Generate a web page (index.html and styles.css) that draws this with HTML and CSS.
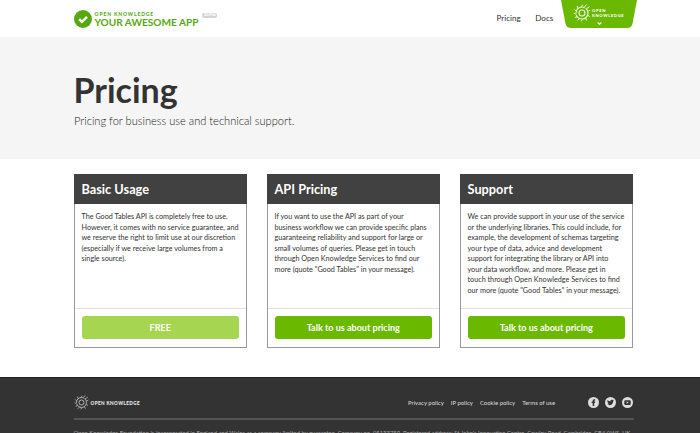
FILE: index.html
```html
<!DOCTYPE html>
<html lang="en">
<head>
<meta charset="utf-8">
<title>Pricing</title>
<link rel="stylesheet" href="styles.css">
</head>
<body>
<svg width="0" height="0" class="defs" aria-hidden="true">
  <symbol id="gear" viewBox="0 0 24 24">
    <g fill="none" stroke="currentColor">
      <circle cx="12" cy="12" r="4" stroke-width="1.5"/>
      <circle cx="12" cy="12" r="8" stroke-width="1.5" stroke-dasharray="22 1.5 17 1.5"/>
      <path d="M11 4l2-3M15 4.500l3-4M17.500 6.500l4.500-3M20 9.500l3-1.500M20 15l2.500 2M17 18.500l1 3.500M12.500 20l-1.500 3M8.500 19.500l-2.500 2.500M5.500 17l-3 1M4 13.500l-3-1M4.300 9.500l-2.500-2.500M6.500 6l-1-3.500" stroke-width="1.3"/>
    </g>
  </symbol>
</svg>
<header class="top">
  <div class="wrap top-row">
    <a class="brand">
      <svg class="check" viewBox="0 0 18 18"><circle cx="9" cy="9" r="9" fill="#55a910"/><path d="M5.100 9.100l2.800 2.700 5.100-5" fill="none" stroke="#fff" stroke-width="2.500"/></svg>
      <span class="brand-text"><span class="brand-org">OPEN KNOWLEDGE</span><span class="brand-name">YOUR AWESOME APP</span></span>
      <span class="badge">ALPHA</span>
    </a>
    <nav class="nav"><a>Pricing</a><a>Docs</a></nav>
    <div class="tab">
      <svg class="tab-shape" viewBox="0 0 76 28"><path d="M0 0H76L71.500 23.500Q70.500 28 66 28H10Q5.500 28 4.500 23.500Z" fill="#6ab800"/></svg>
      <svg class="tab-gear"><use href="#gear"/></svg>
      <span class="tab-text">OPEN<br>KNOWLEDGE</span>
      <svg class="chevron" viewBox="0 0 5 3"><path d="M.6.5l1.900 1.600L4.400.5" fill="none" stroke="#fff" stroke-width="1.200"/></svg>
    </div>
  </div>
</header>
<section class="hero">
  <div class="wrap">
    <h1>Pricing</h1>
    <p>Pricing for business use and technical support.</p>
  </div>
</section>
<main class="wrap cards">
  <article class="card">
    <h2>Basic Usage</h2>
    <p>The Good Tables API is completely free to use.<br>However, it comes with no service guarantee, and<br>we reserve the right to limit use at our discretion<br>(especially if we receive large volumes from a<br>single source).</p>
    <footer><a class="button free">FREE</a></footer>
  </article>
  <article class="card">
    <h2>API Pricing</h2>
    <p>If you want to use the API as part of your<br>business workflow we can provide specific plans<br>guaranteeing reliability and support for large or<br>small volumes of queries. Please get in touch<br>through Open Knowledge Services to find our<br>more (quote "Good Tables" in your message).</p>
    <footer><a class="button">Talk to us about pricing</a></footer>
  </article>
  <article class="card">
    <h2>Support</h2>
    <p>We can provide support in your use of the service<br>or the underlying libraries. This could include, for<br>example, the development of schemas targeting<br>your type of data, advice and development<br>support for integrating the library or API into<br>your data workflow, and more. Please get in<br>touch through Open Knowledge Services to find<br>our more (quote "Good Tables" in your message).</p>
    <footer><a class="button">Talk to us about pricing</a></footer>
  </article>
</main>
<footer class="site-footer">
  <div class="wrap">
    <div class="footer-row">
      <div class="footer-brand"><svg><use href="#gear"/></svg><span>OPEN KNOWLEDGE</span></div>
      <div class="links"><a>Privacy policy</a><a>IP policy</a><a>Cookie policy</a><a>Terms of use</a></div>
      <div class="social">
        <svg viewBox="0 0 11 11"><circle cx="5.500" cy="5.500" r="5.500" fill="#ddd"/><path d="M4.700 9V6H3.700V4.600h1V3.800C4.700 2.600 5.400 2 7.200 2.200v1.200C6.300 3.300 6.200 3.500 6.200 4v.6h1L7 6h-.8v3z" fill="#333"/></svg>
        <svg viewBox="0 0 11 11"><circle cx="5.500" cy="5.500" r="5.500" fill="#ddd"/><path d="M2.500 3q1.300 1.300 2.900 1.300C5.300 2.500 7 2.300 7.700 3.100l1-.3-.5.9.6-.1-.7.800C8 7.700 5 9 2.400 7.600q1.200 0 1.800-.6-1.100-.2-1.300-1h.6Q2.300 5.500 2.300 4.500l.6.200Q2 3.900 2.500 3z" fill="#333"/></svg>
        <svg viewBox="0 0 11 11"><circle cx="5.500" cy="5.500" r="5.500" fill="#ddd"/><rect x="2.300" y="3.200" width="6.400" height="4.700" rx="1.200" fill="#333"/><path d="M4.700 4.300v2.400l2-1.200z" fill="#ddd"/></svg>
      </div>
    </div>
    <p class="legal">Open Knowledge Foundation is incorporated in England and Wales as a company limited by guarantee. Company no. 05133759. Registered address: St John's Innovation Centre, Cowley Road, Cambridge, CB4 0WS, UK.</p>
  </div>
</footer>
</body>
</html>
```

FILE: styles.css
```css
* { box-sizing: border-box; }
html, body { margin: 0; height: 433px; overflow: hidden; }
body { background: #fff; color: #333; font-family: Lato, "Liberation Sans", sans-serif; }
h1, h2, p { margin: 0; }
svg { display: block; flex: none; }
.defs { position: absolute; }
.wrap { width: 560px; margin: 0 0 0 73.5px; }
.top { height: 37px; }
.top-row { display: flex; align-items: flex-start; }
.brand { display: flex; flex: none; width: 423px; padding-top: 9.5px; color: #55a910; }
.check { width: 18px; height: 18px; margin-right: 3px; }
.brand-text { display: flex; flex-direction: column; font-weight: 900; white-space: nowrap; }
.brand-org { font-size: 5px; line-height: 6px; letter-spacing: .86px; padding-top: 1px; }
.brand-name { font-size: 10.1px; line-height: 10px; font-weight: 700; }
.badge { margin: 3px 0 0 4px; width: 15px; height: 5px; border-radius: 2px; background: #d5d5d5; color: #fff; font-size: 3.5px; line-height: 5px; font-weight: 700; text-align: center; }
.nav { display: flex; flex: none; gap: 14.5px; width: 64px; font-size: 8.1px; line-height: 12px; padding-top: 12px; white-space: nowrap; }
.tab { position: relative; flex: none; width: 76px; height: 28px; color: #fff; display: flex; padding: 4px 0 0 12px; }
.tab-shape { position: absolute; inset: 0; width: 76px; height: 28px; }
.tab-gear { position: relative; width: 18px; height: 18px; opacity: .85; }
.tab-text { position: relative; margin: 4px 0 0 1.5px; font-size: 4.1px; line-height: 5px; font-weight: 900; letter-spacing: .65px; }
.chevron { position: absolute; left: 36px; top: 21.5px; width: 5px; height: 3px; }
.hero { height: 122px; background: #f5f5f5; padding-top: 33px; }
.hero h1 { font-size: 34px; line-height: 40px; font-weight: 700; }
.hero p { font-size: 11.08px; line-height: 16px; font-weight: 300; color: #222; margin: 2.5px 0 0 .5px; }
.cards { display: grid; grid-template-columns: repeat(3, 173.5px); gap: 19.5px; padding-top: 15px; height: 218px; align-items: start; }
.card { height: 173.5px; border: 1px solid #999; display: flex; flex-direction: column; }
.card h2 { margin: -1px -1px 0; height: 30px; background: #414141; color: #fff; font-size: 12.75px; line-height: 31px; padding-left: 8px; font-weight: 700; }
.card p { flex: 1; padding: 8px 0 0 7px; font-size: 7.23px; line-height: 10.56px; white-space: nowrap; }
.card footer { height: 39px; border-top: 1px solid #e2e2e2; padding: 7px 7px 0; }
.button { display: block; height: 23.5px; border-radius: 3px; background: #6ab800; color: #fff; font-size: 9.05px; line-height: 24px; text-align: center; font-weight: 700; }
.button.free { background: #a6d552; }
.site-footer { height: 56px; background: #333; color: #ddd; border-top: 1px solid #222; }
.footer-row { display: flex; align-items: center; height: 42px; padding-top: 9px; border-bottom: 2px solid #555; }
.footer-brand { display: flex; flex: none; align-items: center; gap: 2px; width: 334.5px; font-size: 4.6px; font-weight: 900; letter-spacing: .42px; color: #eee; }
.footer-brand svg { width: 15px; height: 15px; color: #bbb; }
.links { display: flex; flex: none; gap: 7.1px; width: 179.5px; font-size: 5.95px; white-space: nowrap; }
.social { display: flex; gap: 6px; }
.social svg { width: 11px; height: 11px; }
.legal { font-size: 5.86px; line-height: 8px; margin-top: 9px; color: #aaa; white-space: nowrap; }
```
